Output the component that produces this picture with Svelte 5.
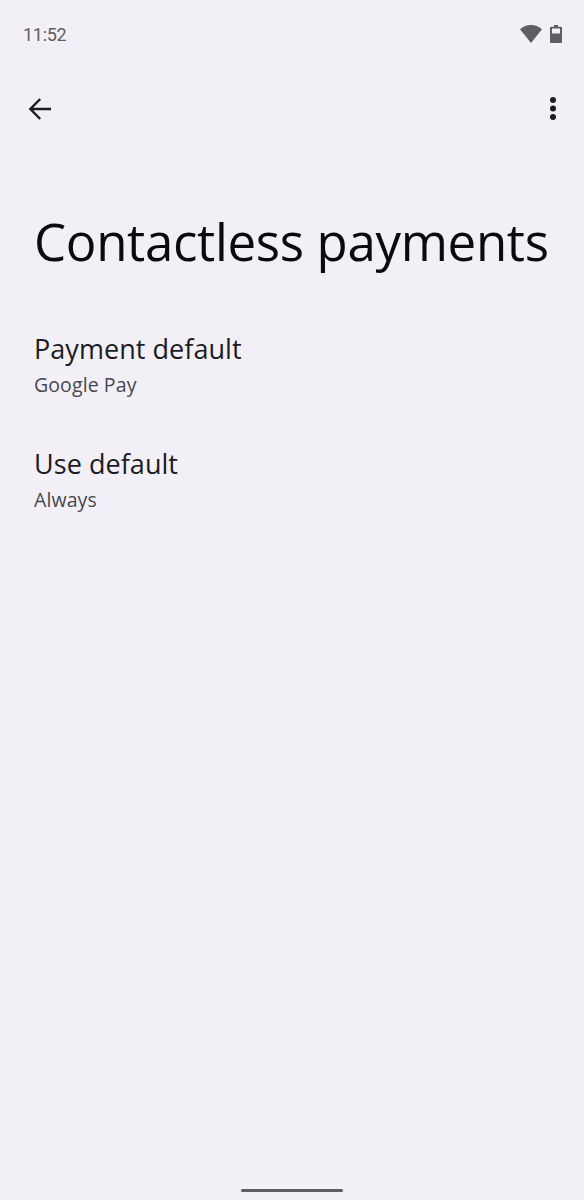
<script lang="ts">
  const rows = [
    { title: 'Payment default', summary: 'Google Pay' },
    { title: 'Use default', summary: 'Always' },
  ];
</script>

<div class="screen">
  <div class="status">
    <span class="clock">11:52</span>
    <div class="status-icons">
      <svg width="22" height="18" viewBox="0 0 22 18" aria-hidden="true">
        <path d="M0 4.2 C3 1.6 7 0 11 0 C15 0 19 1.6 22 4.2 L11 18 Z" fill="#5f5e63" />
      </svg>
      <svg width="12" height="18" viewBox="0 0 12 18" aria-hidden="true">
        <path fill-rule="evenodd" d="M4 0 H8 V1.8 H11 A1 1 0 0 1 12 2.8 V17 A1 1 0 0 1 11 18 H1 A1 1 0 0 1 0 17 V2.8 A1 1 0 0 1 1 1.8 H4 Z M2 3.6 V8.6 H10 V3.6 Z" fill="#5f5e63" />
      </svg>
    </div>
  </div>

  <div class="toolbar">
    <svg class="back" width="24" height="24" viewBox="0 0 24 24" aria-label="Back">
      <path d="M23 12 H3 M12.2 2 L2.4 12 L12.2 22" fill="none" stroke="#1c1b1f" stroke-width="2.5" />
    </svg>
    <svg class="more" width="6" height="24" viewBox="0 0 6 24" aria-label="More options">
      <circle cx="3" cy="3" r="3" fill="#1c1b1f" />
      <circle cx="3" cy="11.5" r="3" fill="#1c1b1f" />
      <circle cx="3" cy="20" r="3" fill="#1c1b1f" />
    </svg>
  </div>

  <h1>Contactless payments</h1>

  <ul class="prefs">
    {#each rows as row (row.title)}
      <li>
        <div class="title">{row.title}</div>
        <div class="summary">{row.summary}</div>
      </li>
    {/each}
  </ul>

  <div class="nav">
    <div class="handle"></div>
  </div>
</div>

<style>
  :global(body) {
    margin: 0;
    background: #f2f0f6;
  }

  .screen {
    height: 1200px;
    display: flex;
    flex-direction: column;
    background: #f2f0f6;
    font-family: 'Open Sans', 'Noto Sans', sans-serif;
    overflow: hidden;
  }

  .status {
    height: 70px;
    box-sizing: border-box;
    padding: 24px 22px 0 23px;
    display: flex;
    justify-content: space-between;
    align-items: flex-start;
  }

  .clock {
    font-family: Roboto, sans-serif;
    font-size: 18px;
    line-height: 21px;
    letter-spacing: -0.3px;
    color: #5f5e63;
  }

  .status-icons {
    display: flex;
    gap: 8px;
    margin-top: 1px;
  }

  .toolbar {
    height: 24px;
    margin-top: 27px;
    padding: 0 28px 0 28px;
    display: flex;
    justify-content: space-between;
    align-items: center;
  }

  h1 {
    margin: 0;
    padding: 85px 0 0 34px;
    font-family: 'Open Sans', sans-serif;
    font-weight: 400;
    font-size: 51px;
    line-height: 70px;
    letter-spacing: -0.33px;
    color: #0b0b0d;
    white-space: nowrap;
  }

  .prefs {
    list-style: none;
    margin: 0;
    padding: 55px 0 0 34px;
    display: flex;
    flex-direction: column;
    gap: 44px;
  }

  .title {
    font-size: 27px;
    line-height: 36px;
    letter-spacing: 0.05px;
    color: #1c1b1f;
  }

  .summary {
    font-family: 'Open Sans', sans-serif;
    font-size: 19.5px;
    line-height: 35px;
    letter-spacing: 0.1px;
    color: #49474e;
  }

  .nav {
    margin-top: auto;
    height: 11px;
    display: flex;
    justify-content: center;
  }

  .handle {
    width: 102px;
    height: 3px;
    border-radius: 2px;
    background: #5f5e63;
  }
</style>
